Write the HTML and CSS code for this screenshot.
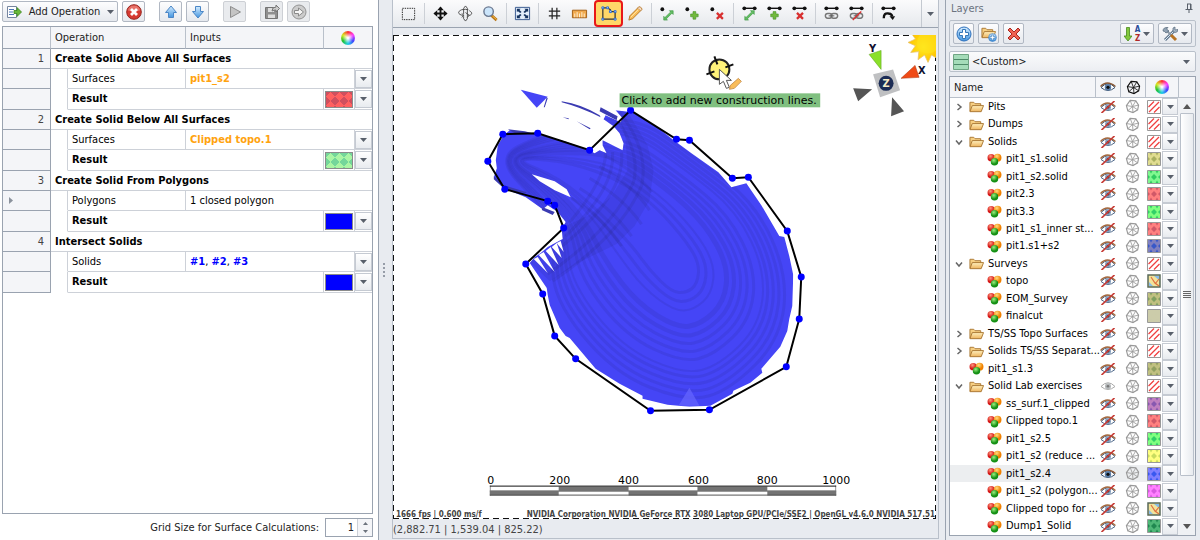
FILE: index.html
```html
<!DOCTYPE html>
<html lang="en">
<head>
    <meta charset="UTF-8">
    <meta name="viewport" content="width=device-width, initial-scale=1.0">
    <title>Solid Lab</title>
    <link rel="stylesheet" href="styles.css">
</head>
<body>
    <svg class="symbols" aria-hidden="true">
        <defs>
            <linearGradient id="blueFill" x1="0" y1="0" x2="0" y2="1"><stop offset="0" stop-color="#d4ecff"/><stop offset="1" stop-color="#4295e0"/></linearGradient>
            <linearGradient id="folderFill" x1="0" y1="0" x2="0" y2="1"><stop offset="0" stop-color="#fff0be"/><stop offset="1" stop-color="#eeb45e"/></linearGradient>
            <radialGradient id="redBall" cx=".4" cy=".3"><stop offset="0" stop-color="#ff9a80"/><stop offset="1" stop-color="#d31212"/></radialGradient>
            <radialGradient id="orangeBall" cx=".4" cy=".3"><stop offset="0" stop-color="#ffdf80"/><stop offset="1" stop-color="#f08000"/></radialGradient>
            <radialGradient id="greenBall" cx=".4" cy=".3"><stop offset="0" stop-color="#9cf080"/><stop offset="1" stop-color="#149014"/></radialGradient>
            <radialGradient id="sunFill"><stop offset="0" stop-color="#ffec20"/><stop offset="1" stop-color="#ffc400"/></radialGradient>
        </defs>
        <symbol id="i-arrow" viewBox="0 0 7 4"><path d="M0 0h7L3.500 4z" fill="#59606b"/></symbol>
        <symbol id="i-addop" viewBox="0 0 16 16"><path d="M1.500 2.500h9v11h-9z" fill="#fff" stroke="#7786a0"/><path d="M3 5.500h5M3 8h4M3 10.500h5" stroke="#4a76b8"/><path d="M8 6.500h3v-3l4.500 4.500-4.500 4.500v-3H8z" fill="#68b83a" stroke="#3a8420" stroke-width=".8"/></symbol>
        <symbol id="i-cancel" viewBox="0 0 16 16"><circle cx="8" cy="8" r="7.300" fill="#d63a32" stroke="#972620"/><path d="M2 6.500a6 5 0 0 1 12 0q-6 2-12 0" fill="#f49a90" opacity=".6"/><path d="M5 5l6 6M11 5l-6 6" stroke="#fff" stroke-width="2.800"/></symbol>
        <symbol id="i-up" viewBox="0 0 16 16"><path d="M8 2l5.500 6.500h-3v5h-5v-5h-3z" fill="url(#blueFill)" stroke="#4b86c6"/></symbol>
        <symbol id="i-down" viewBox="0 0 16 16"><path d="M8 14L2.500 7.500h3v-5h5v5h3z" fill="url(#blueFill)" stroke="#4b86c6"/></symbol>
        <symbol id="i-play" viewBox="0 0 16 16"><path d="M3.500 2.500l10 5.500-10 5.500z" fill="#c4c4c4" stroke="#8d8d8d"/></symbol>
        <symbol id="i-save" viewBox="0 0 16 16"><path d="M1.500 3.500h12v11h-12z" fill="#8f8f8f" stroke="#747474"/><path d="M4 4h6v4H4zM4 10.500h7V14H4z" fill="#ddd"/><path d="M8 7q0-4 4-4V1l3.500 3.500L12 8V6q-2 0-4 1z" fill="#ccc" stroke="#777"/></symbol>
        <symbol id="i-go" viewBox="0 0 16 16"><circle cx="8" cy="8" r="7" fill="#ccc" stroke="#939393"/><path d="M3.500 6.500h4V4L12.500 8l-5 4V9.500h-4z" fill="#f5f5f5" stroke="#8a8a8a"/></symbol>
        <symbol id="i-eye" viewBox="0 0 16 12"><path d="M1 6.500Q8-1 15 6.500Q8 12.500 1 6.500z" fill="#fff" stroke="#38506f"/><path d="M.5 5.500Q7-1.500 15.500 5.500" fill="none" stroke="#8a5a38" stroke-width="1.300"/><circle cx="8" cy="6.300" r="3.200" fill="#5b7ea8"/><circle cx="8" cy="6.300" r="1.600" fill="#111"/></symbol>
        <symbol id="i-eyedim" viewBox="0 0 16 12"><path d="M1 6.500Q8-1 15 6.500Q8 12.500 1 6.500z" fill="#fff" stroke="#aaa"/><circle cx="8" cy="6.300" r="3" fill="#b4b8ba"/><circle cx="8" cy="6.300" r="1.300" fill="#777"/></symbol>
        <symbol id="i-eyeoff" viewBox="0 0 16 12"><path d="M1 6.500Q8-1 15 6.500Q8 12.500 1 6.500z" fill="#fff" stroke="#4c6688"/><path d="M.5 5.500Q7-1.500 15.500 5.500" fill="none" stroke="#a5693f" stroke-width="1.300"/><circle cx="8" cy="6.300" r="3" fill="#86a0bf"/><circle cx="8" cy="6.300" r="1.300" fill="#333"/><path d="M1.500 12L14.500 0" stroke="#c63a35" stroke-width="1.700"/></symbol>
        <symbol id="i-mesh" viewBox="0 0 16 16"><path d="M5.500 1.500l6 .5 3 4.500-1 5-5 3-5.500-2L1.500 7z" fill="none" stroke="currentColor" stroke-width="1.200"/><path d="M8 8L5.500 1.500M8 8l3.500-6M8 8l6.500-1.500M8 8l5.500 3.500M8 8l.5 6.500M8 8l-5 4.500M8 8L1.500 7" fill="none" stroke="currentColor" stroke-width=".9"/></symbol>
        <symbol id="i-folder" viewBox="0 0 16 13"><path d="M1 11.500V2h4l1.500 1.500h6V6" fill="#f7cf82" stroke="#a97632"/><path d="M1 12l2.500-6.500h12L13 12z" fill="url(#folderFill)" stroke="#a97632"/></symbol>
        <symbol id="i-balls" viewBox="0 0 16 14"><circle cx="4.500" cy="5" r="4" fill="url(#redBall)"/><circle cx="11.300" cy="5" r="4.200" fill="url(#orangeBall)"/><circle cx="8" cy="9.500" r="4" fill="url(#greenBall)"/></symbol>
        <symbol id="i-select" viewBox="0 0 18 18"><path d="M2.500 3.500h13v12h-13z" fill="none" stroke="#222" stroke-dasharray="1.500 1"/></symbol>
        <symbol id="i-move" viewBox="0 0 18 18"><path d="M9 3v12M3 9h12" stroke="#111" stroke-width="2"/><path d="M9 1.500l3.500 4h-7zM9 16.500l3.500-4h-7zM1.500 9l4-3.500v7zM16.500 9l-4-3.500v7z" fill="#111"/></symbol>
        <symbol id="i-rotate" viewBox="0 0 18 18"><path d="M5 5C0 7 1 10 6 11h1M13 6c4 2 3 5-1 5M5 5q4-1 7 0M7 9.500v-6L9 1l2 2.500v11L9 17l-2-2.500V12M5 9l2.500 2L5 13M9 8l4 3-2 2" fill="none" stroke="#4b4b4b"/></symbol>
        <symbol id="i-zoom" viewBox="0 0 18 18"><path d="M10 11l5.500 5" stroke="#b87618" stroke-width="3"/><path d="M11 11.500l4.500 4" stroke="#f7bd4a"/><circle cx="7" cy="7" r="5" fill="#cbe5fb" stroke="#6a7890" stroke-width="1.500"/></symbol>
        <symbol id="i-fit" viewBox="0 0 18 18"><path d="M1.500 2.500h15v13h-15z" fill="#e3eefb" stroke="#34558c"/><path d="M3 4h4L5.800 5.200 8 7.500 6.500 8.500 4.200 6.500 3 7.500zM15 4h-4l1.200 1.200L10 7.500l1.500 1 2.300-2L15 7.500zM3 14h4l-1.200-1.200L8 10.500 6.500 9.500l-2.300 2L3 10.500zM15 14h-4l1.200-1.200-2.200-2.300 1.500-1 2.300 2 1.200-1z" fill="#16335f"/></symbol>
        <symbol id="i-grid" viewBox="0 0 18 18"><path d="M6.500 3v12M11.500 3v12M3 6.500h12M3 11.500h12" stroke="#222" stroke-width="1.300"/></symbol>
        <symbol id="i-ruler" viewBox="0 0 18 18"><path d="M1.500 5.500h15v8h-15z" fill="#f0a94e" stroke="#a05c15"/><path d="M4 9v4M6.500 7.500V13M9 9v4M11.500 7.500V13M14 9v4" stroke="#fff2d8"/></symbol>
        <symbol id="i-poly" viewBox="0 0 18 18"><path d="M3 3v12h13V7h-5V5L8 3z" fill="none" stroke="#333" stroke-width="1.300"/><path d="M2 2h2v2H2zM7 2h2v2H7zM10 6h2v2h-2zM15 6h2v2h-2zM15 14h2v2h-2zM2 14h2v2H2z" fill="#dcecff" stroke="#2468d8"/></symbol>
        <symbol id="i-pencil" viewBox="0 0 18 18"><path d="M2 16l1-4.500L12.500 2q2-.5 3.500 2.500L6 14.500z" fill="#f9bd5a" stroke="#b47728"/><path d="M12.500 2q2-.5 3.500 2.500l-1.500 1.500L11 3.500z" fill="#f3d9c3" stroke="#b47728" stroke-width=".6"/><path d="M4 13l8-8" stroke="#ffe7a8"/></symbol>
        <symbol id="s-move" viewBox="0 0 12 12"><path d="M7 1h4v4L9.700 3.700 3.700 9.700 5 11H1V7l1.300 1.300 6-6z" fill="#63bd63" stroke="#36933a" stroke-width=".6"/></symbol>
        <symbol id="s-plus" viewBox="0 0 12 12"><path d="M4.500 2h3v2.500H10v3H7.500V10h-3V7.500H2v-3h2.500z" fill="#72b93e" stroke="#3f8d22" stroke-width=".6"/></symbol>
        <symbol id="s-x" viewBox="0 0 12 12"><path d="M2.500 2.500l7 7M9.500 2.500l-7 7" stroke="#d83030" stroke-width="2.600"/></symbol>
        <symbol id="s-dot" viewBox="0 0 18 18"><circle cx="3.500" cy="4.500" r="2" fill="#111"/></symbol>
        <symbol id="s-bar" viewBox="0 0 18 18"><path d="M3 3.500h12" stroke="#111" stroke-width="1.500"/><circle cx="3.500" cy="3.500" r="2" fill="#111"/><circle cx="14.500" cy="3.500" r="2" fill="#111"/></symbol>
        <symbol id="s-chain" viewBox="0 0 18 18"><rect x="2.500" y="9" width="7" height="5" rx="2.500" fill="none" stroke="#777" stroke-width="1.500"/><rect x="8.500" y="9" width="7" height="5" rx="2.500" fill="none" stroke="#777" stroke-width="1.500"/><path d="M6 11.500h6" stroke="#555"/></symbol>
        <symbol id="i-pin" viewBox="0 0 10 10"><path d="M3.500 1v5M7 1v5M3 1h4M1.500 6.500h7M5 6.500V10M6.500 1v5" fill="none" stroke="#59606b"/></symbol>
        <symbol id="i-add" viewBox="0 0 16 16"><circle cx="8" cy="8" r="7" fill="url(#blueFill)" stroke="#2d70bc"/><path d="M6.500 3.500h3v3h3v3h-3v3h-3v-3h-3v-3h3z" fill="#fff" stroke="#3577b8"/></symbol>
        <symbol id="i-delete" viewBox="0 0 16 16"><path d="M4 2l4 4 4-4 2 2-4 4 4 4-2 2-4-4-4 4-2-2 4-4-4-4z" fill="#f06050" stroke="#a92820"/></symbol>
        <symbol id="i-sort" viewBox="0 0 8 16"><path d="M2.500 1.500h3v8.500H8L4 15 0 10h2.500z" fill="#83c83e" stroke="#488a1b" stroke-width=".8"/></symbol>
        <symbol id="i-tools" viewBox="0 0 16 16"><path d="M3 14L13 4" stroke="#63798f" stroke-width="3"/><path d="M3 14L12 5" stroke="#dce8f2"/><path d="M4 4l5 5" stroke="#8c99a6" stroke-width="2"/><path d="M9 9l5 5" stroke="#b77324" stroke-width="3"/><path d="M1 5q0-4 5-3.500L4.500 3 7 5 4 7 2.500 5.500z" fill="#91a2b3" stroke="#536579" stroke-width=".7"/><path d="M11 5V2l2-1 0 3 3-.5q0 3-3 3z" fill="#a9bac9" stroke="#536579" stroke-width=".7"/></symbol>
    </svg>

    <div class="app">
        <section class="operations">
            <div class="op-toolbar">
                <button class="btn btn-add"><svg class="icon"><use href="#i-addop"/></svg><span>Add Operation</span><svg class="arrow"><use href="#i-arrow"/></svg></button>
                <button class="btn" aria-label="Cancel"><svg class="icon"><use href="#i-cancel"/></svg></button>
                <button class="btn gap-before" aria-label="Move up"><svg class="icon"><use href="#i-up"/></svg></button>
                <button class="btn" aria-label="Move down"><svg class="icon"><use href="#i-down"/></svg></button>
                <button class="btn off gap-before" aria-label="Run"><svg class="icon"><use href="#i-play"/></svg></button>
                <button class="btn off gap-before" aria-label="Save"><svg class="icon"><use href="#i-save"/></svg></button>
                <button class="btn off" aria-label="Next"><svg class="icon"><use href="#i-go"/></svg></button>
            </div>
            <div class="op-grid">
                <table class="op-table">
                    <colgroup><col class="c-num"><col class="c-indent"><col class="c-op"><col><col class="c-color"><col class="c-drop"></colgroup>
                    <thead>
                        <tr><th></th><th colspan="2">Operation</th><th>Inputs</th><th colspan="2"><span class="wheel"></span></th></tr>
                    </thead>
                    <tbody>
                        <tr class="title"><td class="num">1</td><td colspan="5">Create Solid Above All Surfaces</td></tr>
                        <tr><td class="num"></td><td class="indent"></td><td>Surfaces</td><td colspan="2" class="warn">pit1_s2</td><td class="drop"><button aria-label="Choose surfaces"><svg class="arrow"><use href="#i-arrow"/></svg></button></td></tr>
                        <tr class="result"><td class="num"></td><td class="indent"></td><td colspan="2">Result</td><td class="color"><span class="fill fill-red"></span></td><td class="drop"><button aria-label="Choose colour"><svg class="arrow"><use href="#i-arrow"/></svg></button></td></tr>
                        <tr class="title"><td class="num">2</td><td colspan="5">Create Solid Below All Surfaces</td></tr>
                        <tr><td class="num"></td><td class="indent"></td><td>Surfaces</td><td colspan="2" class="warn">Clipped topo.1</td><td class="drop"><button aria-label="Choose surfaces"><svg class="arrow"><use href="#i-arrow"/></svg></button></td></tr>
                        <tr class="result"><td class="num"></td><td class="indent"></td><td colspan="2">Result</td><td class="color"><span class="fill fill-green"></span></td><td class="drop"><button aria-label="Choose colour"><svg class="arrow"><use href="#i-arrow"/></svg></button></td></tr>
                        <tr class="title"><td class="num">3</td><td colspan="5">Create Solid From Polygons</td></tr>
                        <tr><td class="num current"><svg class="marker" viewBox="0 0 4 7"><path d="M0 0v7l4-3.500z" fill="#8b929c"/></svg></td><td class="indent"></td><td>Polygons</td><td colspan="3">1 closed polygon</td></tr>
                        <tr class="result"><td class="num"></td><td class="indent"></td><td colspan="2">Result</td><td class="color"><span class="fill fill-blue"></span></td><td class="drop"><button aria-label="Choose colour"><svg class="arrow"><use href="#i-arrow"/></svg></button></td></tr>
                        <tr class="title"><td class="num">4</td><td colspan="5">Intersect Solids</td></tr>
                        <tr><td class="num"></td><td class="indent"></td><td>Solids</td><td colspan="2" class="refs"><b>#1</b>, <b>#2</b>, <b>#3</b></td><td class="drop"><button aria-label="Choose solids"><svg class="arrow"><use href="#i-arrow"/></svg></button></td></tr>
                        <tr class="result"><td class="num"></td><td class="indent"></td><td colspan="2">Result</td><td class="color"><span class="fill fill-blue"></span></td><td class="drop"><button aria-label="Choose colour"><svg class="arrow"><use href="#i-arrow"/></svg></button></td></tr>
                    </tbody>
                </table>
            </div>
            <div class="grid-size">
                <label for="gridSize">Grid Size for Surface Calculations:</label>
                <div class="spinner">
                    <input id="gridSize" type="number" value="1">
                    <div class="steps">
                        <button aria-label="Increase"><svg viewBox="0 0 5 3"><path d="M0 3h5L2.500 0z" fill="#6c737d"/></svg></button>
                        <button aria-label="Decrease"><svg viewBox="0 0 5 3"><path d="M0 0h5L2.500 3z" fill="#6c737d"/></svg></button>
                    </div>
                </div>
            </div>
        </section>

        <div class="splitter"><i></i><i></i><i></i><i></i></div>

        <main class="view">
            <div class="view-toolbar">
                <button class="tool" aria-label="Select"><svg><use href="#i-select"/></svg></button>
                <span class="sep"></span>
                <button class="tool" aria-label="Pan"><svg><use href="#i-move"/></svg></button>
                <button class="tool" aria-label="Rotate"><svg><use href="#i-rotate"/></svg></button>
                <button class="tool" aria-label="Zoom"><svg><use href="#i-zoom"/></svg></button>
                <span class="sep"></span>
                <button class="tool" aria-label="Fit view"><svg><use href="#i-fit"/></svg></button>
                <span class="sep"></span>
                <button class="tool" aria-label="Grid"><svg><use href="#i-grid"/></svg></button>
                <button class="tool" aria-label="Measure"><svg><use href="#i-ruler"/></svg></button>
                <button class="tool active" aria-label="Polygon"><svg><use href="#i-poly"/></svg></button>
                <button class="tool" aria-label="Draw"><svg><use href="#i-pencil"/></svg></button>
                <span class="sep"></span>
                <button class="tool" aria-label="Move point"><svg viewBox="0 0 18 18"><use href="#s-dot"/><use href="#s-move" x="4" y="5" width="12" height="12"/></svg></button>
                <button class="tool" aria-label="Add point"><svg viewBox="0 0 18 18"><use href="#s-dot"/><use href="#s-plus" x="5" y="5" width="12" height="12"/></svg></button>
                <button class="tool" aria-label="Delete point"><svg viewBox="0 0 18 18"><use href="#s-dot"/><use href="#s-x" x="6" y="6" width="11" height="11"/></svg></button>
                <span class="sep"></span>
                <button class="tool" aria-label="Move edge"><svg viewBox="0 0 18 18"><use href="#s-bar"/><use href="#s-move" x="3" y="5" width="12" height="12"/></svg></button>
                <button class="tool" aria-label="Add edge"><svg viewBox="0 0 18 18"><use href="#s-bar"/><use href="#s-plus" x="3" y="5" width="12" height="12"/></svg></button>
                <button class="tool" aria-label="Delete edge"><svg viewBox="0 0 18 18"><use href="#s-bar"/><use href="#s-x" x="4" y="6" width="11" height="11"/></svg></button>
                <span class="sep"></span>
                <button class="tool" aria-label="Join"><svg viewBox="0 0 18 18"><use href="#s-bar"/><use href="#s-chain"/></svg></button>
                <button class="tool" aria-label="Split"><svg viewBox="0 0 18 18"><use href="#s-bar"/><use href="#s-chain"/><path d="M5 16l9-9" stroke="#d83030" stroke-width="1.500"/></svg></button>
                <span class="sep"></span>
                <button class="tool" aria-label="Reverse"><svg viewBox="0 0 18 18"><use href="#s-bar"/><path d="M4 14q0-6 5-5 3 0 4 3" fill="none" stroke="#111" stroke-width="2.500"/><path d="M10 12h6l-2.500 4z" fill="#111"/></svg></button>
                <button class="overflow" aria-label="More tools"><svg class="arrow"><use href="#i-arrow"/></svg></button>
            </div>

            <div class="canvas">
                <svg class="scene" viewBox="393 35 544 484" preserveAspectRatio="xMidYMid meet">
                    <defs>
                        <clipPath id="pitClip"><path d="M496 160L498 145 504 135 510 130 538 134 565 141 589 150 595 153 600 150 607 153 603 145 603 140 623 150 624 143 620 133 614 126 604 119 606 115 621 122 623 118 616 110 633 112 658 127 673 139 692 153 719 172 732 187 747 183 762 205 780 236 785 237 790 256 794 275 793 306 790 319 788 331 781 347 762 369 763 373 751 383 734 391 733 394 711 406 690 407 668 405 643 399 643 396 620 384 596 369 570 338 566 336 560 328 550 305 548 295 547 288 530 263 535 257 541 253 548 247 563 239 562 229 566 222 558 212 548 205 543 209 526 197 506 189 494 177 497 168z"/></clipPath>
                    </defs>
                    <g clip-path="url(#pitClip)">
                        <rect x="480" y="100" width="330" height="320" fill="#4545f6"/>
                        <g class="rings" id="rings"></g>
                        <g class="haul">
                            <path d="M612 112Q642 150 634 182Q612 230 548 274"/>
                            <path d="M620 112Q650 150 642 186Q620 236 553 281"/>
                            <path d="M606 152Q606 180 570 222M613 152Q616 188 566 236M622 152Q626 196 560 248"/>
                            <path d="M572 198Q604 218 622 246M580 188Q612 208 632 236M590 178Q624 198 642 224M600 166Q634 186 650 210M606 156Q638 172 652 192"/>
                        </g>
                        <path d="M616 105L630 115 648 145 654 170 650 200 635 226 617 244 580 262 550 281 530 262 563 240 568 225 590 215 612 196 628 170 626 138z" fill="#25257c" opacity=".12"/>
                        <path d="M690 388l10 18h-21z" fill="#6767ff" opacity=".7"/>
                    </g>
                    <path d="M521 89.500l27 7-11 11z" fill="#4545f6"/>
                    <g fill="#3b3bb2">
                        <path d="M601 107l17 9-1 4-17-9zM562 101q20 3 38 14l1 2q-20-10-39-15zM563 117l6 1v1zM577 121l14 7-1 1zM547 97l1 1-3 9-1 0zM494 176l10 9 23 7-1 1-20-3-12-11zM508 129l17 2 12 3h-20zM543 207l12 5-2 3-11-5z"/>
                    </g>
                    <path d="M532 174l23 7 12 8 4 8-16-7-15-9zM534 259l14 14-10-16zM539 255l16 17-11-20zM546 251l13 14-8-18zM552 247l10 11-5-15zM557 243l7 9-3-11z" fill="#fff"/>
                    <polygon class="outline" id="outline" points="631,110 677,139 690,140 733,178 749,177 788,231 802,277 800,319 787,367 710,410 651,411 576,359 555,336 543,294 526,264 564,228 555,205 548,201 505,189 488,161 503,134 538,133 590,150"/>
                    <g id="nodes" fill="#0000ff"></g>

                    <circle cx="720" cy="69" r="10" fill="#fff37a" stroke="#222" stroke-width="2"/>
                    <path d="M715 56l3 8M723 74l3 8M707 74l8-3M726 67l8-3" stroke="#111" stroke-width="2"/>
                    <path d="M720 69v15l4-3 3 7 3-1-3-7h5z" fill="#fff" stroke="#555"/>
                    <path d="M730 89l1-4 8-7 3 3-7 7z" fill="#f9bd5a" stroke="#c08a4a" stroke-width=".8"/>
                    <rect x="620" y="93" width="201" height="14" fill="#80c080"/>
                    <text class="hint" x="622" y="104">Click to add new construction lines.</text>

                    <polygon points="929,62 925.6,54.6 919,59.300 919.8,51.2 911.7,52 916.4,45.4 909,42 916.4,38.6 911,31 940,31 940,59 932.4,54.6" fill="url(#sunFill)" stroke="#e9c46c" stroke-width=".8"/>
                    <circle cx="929" cy="42" r="11" fill="#ffe21c" opacity=".6"/>
                    <path d="M874 74l20-5 7 21-20 7z" fill="#bfc0c2"/>
                    <circle cx="887" cy="83" r="7.500" fill="#1c2c55"/>
                    <text class="axis-z" x="887" y="87">Z</text>
                    <path d="M870 54l12-4v19z" fill="#8ae02a" stroke="#5b9d1b" stroke-width=".5"/>
                    <path d="M902 78l14-13 4 12z" fill="#f04a16" stroke="#a52c05" stroke-width=".5"/>
                    <path d="M854 88l19 1-14 12zM893 97l12 14-13 5z" fill="#555"/>
                    <text class="axis" x="870" y="52">Y</text>
                    <text class="axis" x="919" y="74">X</text>

                    <g class="scale-text">
                        <text x="491" y="484">0</text><text x="560" y="484">200</text><text x="629" y="484">400</text>
                        <text x="699" y="484">600</text><text x="768" y="484">800</text><text x="837" y="484">1000</text>
                    </g>
                    <rect x="490" y="486" width="347" height="10" fill="#fff"/>
                    <path d="M490.500 486v10M836.500 486v10M490 491.500h347" stroke="#999" fill="none"/>
                    <path d="M559 487h70v5h-70zM698 487h70v5h-70zM490 491h69v5h-69zM629 491h69v5h-69zM768 491h69v5h-69z" fill="#737373"/>
                    <path d="M490 486.500h347" stroke="#111"/>
                    <path d="M490 495.500h347" stroke="#555"/>
                </svg>
                <p class="gpu"><span>1666 fps | 0.600 ms/f</span><span>NVIDIA Corporation NVIDIA GeForce RTX 3080 Laptop GPU/PCIe/SSE2 | OpenGL v4.6.0 NVIDIA 517.51</span></p>
            </div>
            <div class="status">(2,882.71 | 1,539.04 | 825.22)</div>
        </main>

        <aside class="layers">
            <h2>Layers<svg class="pin"><use href="#i-pin"/></svg></h2>
            <div class="layer-toolbar">
                <button class="btn" aria-label="Add layer"><svg class="icon"><use href="#i-add"/></svg></button>
                <button class="btn" aria-label="Add folder"><svg class="icon" viewBox="0 0 16 16"><use href="#i-folder" width="15" height="13"/><use href="#i-add" x="7" y="7" width="9" height="9"/></svg></button>
                <button class="btn" aria-label="Delete layer"><svg class="icon"><use href="#i-delete"/></svg></button>
                <button class="btn wide push" aria-label="Sort"><svg class="sort"><use href="#i-sort"/></svg><span class="az"><span>A</span><span>Z</span></span><svg class="arrow"><use href="#i-arrow"/></svg></button>
                <button class="btn wide" aria-label="Tools"><svg class="icon"><use href="#i-tools"/></svg><svg class="arrow"><use href="#i-arrow"/></svg></button>
            </div>
            <div class="scheme">
                <svg viewBox="0 0 16 16"><path d="M.5.5h15v15H.5z" fill="#a5dcb9" stroke="#6fa583"/><path d="M1 5.500h14M1 10.500h14" stroke="#4e8a68"/></svg>
                <select aria-label="Layer scheme"><option>&lt;Custom&gt;</option></select>
                <svg class="arrow"><use href="#i-arrow"/></svg>
            </div>
            <div class="tree">
                <table class="tree-table">
                    <colgroup><col><col class="t-eye"><col class="t-mesh"><col class="t-color"><col class="t-drop"><col class="t-scroll"></colgroup>
                    <thead>
                        <tr><th>Name</th><th><svg class="eye"><use href="#i-eye"/></svg></th><th><svg class="mesh dark"><use href="#i-mesh"/></svg></th><th colspan="2"><span class="wheel"></span></th><th></th></tr>
                    </thead>
                    <tbody id="layerRows"></tbody>
                </table>
            </div>
        </aside>
    </div>
    <script src="script.js"></script>
</body>
</html>
```
FILE: styles.css
```css
:root {
    --panel: #e8ebf0;
    --line: #9aa3b0;
    --line-light: #cdd1d8;
    --header: #f4f5f8;
    --text: #222;
}

* {
    box-sizing: border-box;
}

body {
    margin: 0;
    background: var(--panel);
    color: var(--text);
    font-family: "DejaVu Sans Condensed", "DejaVu Sans", sans-serif;
    font-size: 11px;
}

button,
input,
select {
    font: inherit;
    color: inherit;
}

button {
    padding: 0;
    display: flex;
    align-items: center;
    justify-content: center;
    white-space: nowrap;
}

.symbols {
    position: absolute;
    width: 0;
    height: 0;
}

.app {
    display: grid;
    grid-template-columns: 379px 13px minmax(0, 1fr) 261px;
    height: 100vh;
}

.icon {
    width: 16px;
    height: 16px;
    flex: none;
}

.arrow {
    width: 7px;
    height: 4px;
    flex: none;
}

.wheel {
    display: block;
    width: 14px;
    height: 14px;
    margin: 0 auto;
    border-radius: 50%;
    background: radial-gradient(circle, #fff 5%, transparent 55%), conic-gradient(#ff3030, #ff40ff, #4040ff, #20d0e8, #20c030, #d8e820, #ff3030);
}

.btn {
    width: 23px;
    height: 21px;
    border: 1px solid #b1b8c3;
    border-radius: 2px;
    background: linear-gradient(#fdfdfe, #e6e9ee);
}

.btn.off {
    background: #e9ebee;
    border-color: #cdd0d5;
}

/* operations */
.operations {
    display: flex;
    flex-direction: column;
    background: #fff;
    border-right: 1px solid var(--line);
    padding: 1px 5px 3px 2px;
    min-height: 0;
}

.op-toolbar {
    display: flex;
    gap: 4px;
    height: 25px;
}

.btn-add {
    width: 116px;
    gap: 7px;
}

.gap-before {
    margin-left: 10px;
}

.op-grid {
    flex: 1;
    border: 1px solid var(--line);
    min-height: 0;
}

.op-table {
    width: 100%;
    table-layout: fixed;
    border-collapse: separate;
    border-spacing: 0;
}

.c-num { width: 48px; }
.c-indent { width: 17px; }
.c-op { width: 118px; }
.c-color { width: 31px; }
.c-drop { width: 17px; }

.op-table th {
    height: 22px;
    padding: 0 4px;
    background: var(--header);
    border-right: 1px solid #b9c0ca;
    border-bottom: 1px solid var(--line);
    font-weight: normal;
    text-align: left;
}

.op-table th:last-child {
    border-right: 0;
}

.op-table td {
    height: 20px;
    padding: 0 4px;
    border-right: 1px solid var(--line-light);
    border-bottom: 1px solid var(--line-light);
    line-height: 16px;
    white-space: nowrap;
    color: #000;
}

.op-table tr > td:last-child {
    border-right: 0;
}

.op-table .result td {
    height: 21px;
    font-weight: bold;
}

.op-table .title td + td {
    font-weight: bold;
}

.op-table td.num {
    background: var(--header);
    border-right: 1px solid var(--line);
    border-bottom-color: var(--line);
    text-align: right;
    padding-right: 6px;
    color: #444;
}

.op-table td.current {
    text-align: left;
    padding-left: 6px;
}

.marker {
    display: block;
    width: 4px;
    height: 7px;
}

.op-table td.indent {
    border-bottom-color: transparent;
}

.op-table td.warn {
    color: #ffa30f;
    font-weight: bold;
}

.refs b {
    color: #0000ff;
}

.op-table td.color {
    padding: 1px;
}

.op-table td.drop {
    padding: 0;
}

.drop button {
    width: 100%;
    height: 18px;
    border: 1px solid #c5cad2;
    background: linear-gradient(#fff, #e8ebef);
}

.fill {
    display: block;
    height: 17px;
    border: 1px solid #8b8b8b;
}

.fill-red {
    background:
        linear-gradient(45deg, #d04f5e 25%, transparent 25% 75%, #d04f5e 75%) 0 0 / 9px 9px,
        linear-gradient(-45deg, #d04f5e 25%, transparent 25% 75%, #d04f5e 75%) 0 0 / 9px 9px,
        #ff6060;
}

.fill-green {
    background:
        linear-gradient(45deg, #74d69a 25%, transparent 25% 75%, #74d69a 75%) 0 0 / 9px 9px,
        linear-gradient(-45deg, #74d69a 25%, transparent 25% 75%, #74d69a 75%) 0 0 / 9px 9px,
        #aaf5a4;
}

.fill-blue {
    background: #0000ff;
}

.grid-size {
    display: flex;
    justify-content: flex-end;
    align-items: center;
    gap: 6px;
    padding-top: 4px;
}

.spinner {
    display: flex;
    width: 48px;
    height: 19px;
    border: 1px solid var(--line);
    background: #fff;
}

.spinner input {
    width: 31px;
    border: 0;
    padding: 0 3px 0 0;
    text-align: right;
    background: none;
    appearance: textfield;
}

.spinner input::-webkit-inner-spin-button {
    appearance: none;
}

.steps {
    flex: 1;
    display: flex;
    flex-direction: column;
    border-left: 1px solid var(--line-light);
}

.steps button {
    flex: 1;
    border: 0;
    background: var(--header);
}

.steps svg {
    width: 5px;
    height: 3px;
}

/* splitter */
.splitter {
    display: flex;
    flex-direction: column;
    align-items: center;
    justify-content: center;
    gap: 2px;
    padding-right: 4px;
}

.splitter i {
    width: 2px;
    height: 2px;
    background: #969da8;
}

/* 3d view */
.view {
    display: flex;
    flex-direction: column;
    min-width: 0;
    min-height: 0;
    margin-bottom: 1px;
    border: 1px solid #b9c0ca;
    border-top: 0;
}

.view-toolbar {
    display: flex;
    align-items: center;
    height: 28px;
    margin-bottom: 7px;
    padding-left: 3px;
    border-bottom: 1px solid var(--line);
    background: linear-gradient(#fbfbfc, #e6e9ed);
}

.tool {
    width: 25px;
    height: 27px;
    border: 0;
    background: none;
    flex: none;
}

.tool svg {
    width: 17px;
    height: 17px;
}

.tool.active {
    width: 29px;
    margin-left: 2px;
    border: 2px solid #e81818;
    border-radius: 4px;
    background: #ffd768;
}

.sep {
    width: 1px;
    height: 21px;
    margin: 0 3px;
    background: #ccd0d6;
}

.overflow {
    width: 17px;
    height: 27px;
    margin-left: auto;
    border: 0;
    border-left: 1px solid #c4c9d0;
    background: none;
}

.canvas {
    position: relative;
    flex: 1;
    min-height: 0;
    margin-right: 2px;
    background:
        repeating-linear-gradient(90deg, #111 0 6px, transparent 6px 10px) top / 100% 1px no-repeat,
        repeating-linear-gradient(90deg, #111 0 6px, transparent 6px 10px) bottom / 100% 1px no-repeat,
        repeating-linear-gradient(#111 0 6px, transparent 6px 10px) left / 1px 100% no-repeat,
        repeating-linear-gradient(#111 0 6px, transparent 6px 10px) right / 1px 100% no-repeat,
        #fff;
}

.scene {
    display: block;
    width: 100%;
    height: 100%;
}

.rings path {
    fill: none;
    stroke: #2b2b9a;
    stroke-opacity: .17;
}

.haul path {
    fill: none;
    stroke: #20207a;
    stroke-width: 3;
    stroke-opacity: .14;
}

.outline {
    fill: none;
    stroke: #000;
    stroke-width: 2;
}

.hint,
.scale-text {
    font-family: "DejaVu Sans", sans-serif;
    font-size: 11px;
}

.scale-text {
    text-anchor: middle;
}

.axis,
.axis-z {
    font-weight: bold;
    font-size: 11px;
    fill: #101030;
}

.axis-z {
    fill: #f7ecc8;
    text-anchor: middle;
}

.gpu {
    position: absolute;
    left: 3px;
    right: 1px;
    bottom: 0;
    display: flex;
    justify-content: space-between;
    margin: 0;
    overflow: hidden;
    white-space: nowrap;
    font-weight: bold;
    font-size: 8px;
    line-height: 9px;
    color: #444;
}

.status {
    height: 19px;
    line-height: 21px;
    color: #444;
}

/* layers */
.layers {
    display: flex;
    flex-direction: column;
    min-height: 0;
    margin-left: 6px;
    padding: 0 4px 4px 3px;
    border-left: 1px solid var(--line);
}

.layers h2 {
    display: flex;
    justify-content: space-between;
    align-items: center;
    height: 20px;
    margin: 0;
    padding: 0 2px 4px;
    font-size: 11px;
    font-weight: normal;
    color: #6b7380;
}

.pin {
    width: 10px;
    height: 10px;
}

.layer-toolbar {
    display: flex;
    align-items: center;
    gap: 4px;
    height: 27px;
    padding: 0 3px;
    border: 1px solid #b9c0ca;
    border-radius: 2px;
}

.layer-toolbar .btn {
    width: 21px;
}

.layer-toolbar .wide {
    width: 34px;
    gap: 3px;
}

.push {
    margin-left: auto;
}

.sort {
    width: 8px;
    height: 16px;
}

.az {
    display: flex;
    flex-direction: column;
    font-size: 8px;
    font-weight: bold;
    line-height: 9px;
    color: #2a4c9c;
}

.az span + span {
    color: #b02828;
}

.scheme {
    display: flex;
    align-items: center;
    height: 21px;
    margin: 4px 0;
    padding: 0 5px 0 3px;
    border: 1px solid #b9c0ca;
    border-radius: 2px;
    background: linear-gradient(#fafbfc, #eceef2);
}

.scheme svg:first-child {
    width: 16px;
    height: 16px;
}

.scheme select {
    flex: 1;
    appearance: none;
    border: 0;
    padding: 0 3px;
    background: none;
}

.tree {
    flex: 1;
    min-height: 0;
    border: 1px solid var(--line);
    background: #fff;
    display: grid;
}

.tree-table {
    width: 100%;
    height: 100%;
    table-layout: fixed;
    border-spacing: 0;
}

.t-eye { width: 25px; }
.t-mesh { width: 25px; }
.t-color { width: 17px; }
.t-drop { width: 16px; }
.t-scroll { width: 17px; }

.tree-table th {
    height: 21px;
    padding: 0 4px;
    background: var(--header);
    border-left: 1px solid #b9c0ca;
    border-bottom: 1px solid #b9c0ca;
    font-weight: normal;
    text-align: left;
}

.tree-table th:first-child {
    border-left: 0;
}

.tree-table td {
    padding: 0;
    line-height: 14px;
    color: #000;
}

.tree-table .eye {
    display: block;
    width: 16px;
    height: 12px;
    margin: 0 auto;
}

.tree-table .mesh {
    display: block;
    width: 15px;
    height: 15px;
    margin: 0 auto;
    color: #999;
}

.tree-table .dark {
    color: #111;
}

.layer-name {
    display: flex;
    align-items: center;
    gap: 4px;
    padding-left: 5px;
    white-space: nowrap;
}

.layer-name .chevron {
    width: 8px;
    height: 8px;
    margin-right: 2px;
    flex: none;
}

.layer-name .kind {
    width: 15px;
    height: 13px;
    flex: none;
}

.layer-name.leaf {
    padding-left: 19px;
}

.layer-name.deep {
    padding-left: 37px;
}

tr.selected td:nth-child(-n+4) {
    background: #eceef0;
}

.swatch {
    display: block;
    width: 14px;
    height: 14px;
    margin: 0 auto;
}

.tree-table .drop button {
    width: 16px;
    height: 17px;
}

.scroll {
    height: 100%;
    background: #eff1f4;
}

.scrollbar {
    display: flex;
    flex-direction: column;
    align-items: center;
    height: 100%;
    padding: 6px 1px;
}

.scrollbar .thumb {
    display: flex;
    align-items: center;
    justify-content: center;
    width: 14px;
    flex: 1;
    margin: 4px 0 48px;
    border: 1px solid #b9c0ca;
    border-radius: 1px;
    background: linear-gradient(90deg, #fff, #e8ebef);
}

.scrollbar svg {
    width: 8px;
    height: 5px;
}

.scrollbar .thumb svg {
    height: 8px;
}
```
FILE: script.js
```js
// kind, name, level, visibility, swatch, swatch dots
const layers = [
    ['closed', 'Pits', 0, 'eyeoff', 'hatch'],
    ['closed', 'Dumps', 0, 'eyeoff', 'hatch'],
    ['open', 'Solids', 0, 'eyeoff', 'hatch'],
    ['leaf', 'pit1_s1.solid', 1, 'eyeoff', '#e0dc90', '#a9b060'],
    ['leaf', 'pit1_s2.solid', 1, 'eyeoff', '#80f890', '#30cc60'],
    ['leaf', 'pit2.3', 1, 'eyeoff', '#ff8080', '#d05868'],
    ['leaf', 'pit3.3', 1, 'eyeoff', '#80ff80', '#30d068'],
    ['leaf', 'pit1_s1_inner st...', 1, 'eyeoff', '#ff8080', '#d05868'],
    ['leaf', 'pit1.s1+s2', 1, 'eyeoff', '#8080c0', '#3858c8'],
    ['open', 'Surveys', 0, 'eyeoff', 'hatch'],
    ['leaf', 'topo', 1, 'eyeoff', 'image'],
    ['leaf', 'EOM_Survey', 1, 'eyeoff', '#c0c080', '#80a060'],
    ['leaf', 'finalcut', 1, 'eyeoff', '#ccccaa', '#ccccaa'],
    ['closed', 'TS/SS Topo Surfaces', 0, 'eyeoff', 'hatch'],
    ['closed', 'Solids TS/SS Separat...', 0, 'eyeoff', 'hatch'],
    ['leaf', 'pit1_s1.3', 0, 'eyeoff', '#c0c080', '#90a060'],
    ['open', 'Solid Lab exercises', 0, 'eyedim', 'hatch'],
    ['leaf', 'ss_surf.1_clipped', 1, 'eyeoff', '#c080c0', '#8858b0'],
    ['leaf', 'Clipped topo.1', 1, 'eyeoff', '#ff8080', '#d05868'],
    ['leaf', 'pit1_s2.5', 1, 'eyeoff', '#80ff80', '#30d068'],
    ['leaf', 'pit1_s2 (reduce ...', 1, 'eyeoff', '#ffff80', '#c8dc60'],
    ['leaf', 'pit1_s2.4', 1, 'eye', '#8080ff', '#3858f0'],
    ['leaf', 'pit1_s2 (polygon...', 1, 'eyeoff', '#ff80ff', '#d858e0'],
    ['leaf', 'Clipped topo for ...', 1, 'eyeoff', 'image'],
    ['leaf', 'Dump1_Solid', 1, 'eyeoff', '#50b878', '#208850']
];

function swatch(color, dots) {
    let inner;
    if (color === 'hatch') {
        inner = '<path d="M.5.5h13v13H.5z" fill="#fff" stroke="#999"/><path d="M1.500 7L7 1.500M2 12L12 2M7 12.500L12.500 7" stroke="#f04040" stroke-width="1.300"/>';
    } else if (color === 'image') {
        inner = '<path d="M1 1h12v12H1z" fill="#f2e39a" stroke="#5a6a5a" stroke-width="1.500"/><path d="M7 2h5v4zM2 8l4 4H2z" fill="#88bce8"/><path d="M4 3l4 6 4 3M12 5l-4 5" fill="none" stroke="#e07040" stroke-width="1.200"/>';
    } else {
        inner = `<path d="M.5.5h13v13H.5z" fill="${color}"/><path d="M7 4l3 3-3 3-3-3zM1 5l2 2-2 2zM13 5l-2 2 2 2zM2.500 1h3L4 3.500zM8.500 1h3L10 3.500zM2.500 13h3L4 10.500zM8.500 13h3L10 10.500z" fill="${dots}"/><path d="M.5.5h13v13H.5z" fill="none" stroke="#999"/>`;
    }
    return `<svg class="swatch" viewBox="0 0 14 14">${inner}</svg>`;
}

function nameCell(kind, name, level) {
    if (kind === 'leaf') {
        return `<div class="layer-name ${level ? 'deep' : 'leaf'}"><svg class="kind"><use href="#i-balls"/></svg>${name}</div>`;
    }
    const d = kind === 'open' ? 'M1 2.500L4 6l3-3.500' : 'M2.500 1L6 4 2.500 7';
    return `<div class="layer-name"><svg class="chevron" viewBox="0 0 8 8"><path d="${d}" fill="none" stroke="#666" stroke-width="1.500"/></svg><svg class="kind"><use href="#i-folder"/></svg>${name}</div>`;
}

const scrollbar = `<td class="scroll" rowspan="${layers.length}"><div class="scrollbar">
    <svg viewBox="0 0 8 5"><path d="M0 5h8L4 0z" fill="#555"/></svg>
    <div class="thumb"><svg viewBox="0 0 8 8"><path d="M0 0h8v1H0zM0 2h8v1H0zM0 4h8v1H0zM0 6h8v1H0z" fill="#666"/></svg></div>
    <svg viewBox="0 0 8 5"><path d="M0 0h8L4 5z" fill="#555"/></svg></div></td>`;

document.getElementById('layerRows').innerHTML = layers.map(([kind, name, level, eye, color, dots], i) => `
    <tr class="${eye === 'eye' ? 'selected' : ''}">
        <td>${nameCell(kind, name, level)}</td>
        <td><svg class="eye"><use href="#i-${eye}"/></svg></td>
        <td><svg class="mesh"><use href="#i-mesh"/></svg></td>
        <td>${swatch(color, dots)}</td>
        <td class="drop"><button aria-label="Colour of ${name}"><svg class="arrow"><use href="#i-arrow"/></svg></button></td>
        ${i === 0 ? scrollbar : ''}
    </tr>`).join('');

// benches: blend from the pit floor out to the crest
const floor = [[512, 158], [560, 160], [610, 175], [650, 200], [682, 235], [700, 262], [698, 284], [687, 293], [672, 292], [650, 270], [632, 245], [600, 212], [560, 178]];
const crest = [[494, 158], [540, 132], [632, 106], [705, 158], [762, 200], [796, 275], [788, 345], [735, 398], [690, 412], [610, 382], [544, 300], [552, 240], [540, 208]];
const benches = [[0, 3], [.08, 3], [.16, 2], [.3, 5], [.38, 4], [.45, 3], [.52, 3], [.59, 3], [.69, 2], [.74, 3], [.8, 3], [.86, 3], [.92, 3]];

function ring(t) {
    const p = floor.map((f, i) => [f[0] + (crest[i][0] - f[0]) * t, f[1] + (crest[i][1] - f[1]) * t]);
    const mid = (a, b) => `${((a[0] + b[0]) / 2).toFixed(1)} ${((a[1] + b[1]) / 2).toFixed(1)}`;
    let d = 'M' + mid(p[p.length - 1], p[0]);
    p.forEach((q, i) => {
        d += `Q${q[0].toFixed(1)} ${q[1].toFixed(1)} ${mid(q, p[(i + 1) % p.length])}`;
    });
    return d + 'z';
}

document.getElementById('rings').innerHTML = benches.map(([t, w]) => `<path d="${ring(t)}" stroke-width="${w}"/>`).join('');

document.getElementById('nodes').innerHTML = document.getElementById('outline').getAttribute('points').split(' ').map(p => {
    const [x, y] = p.split(',');
    return `<circle cx="${x}" cy="${y}" r="3.500"/>`;
}).join('');
```
